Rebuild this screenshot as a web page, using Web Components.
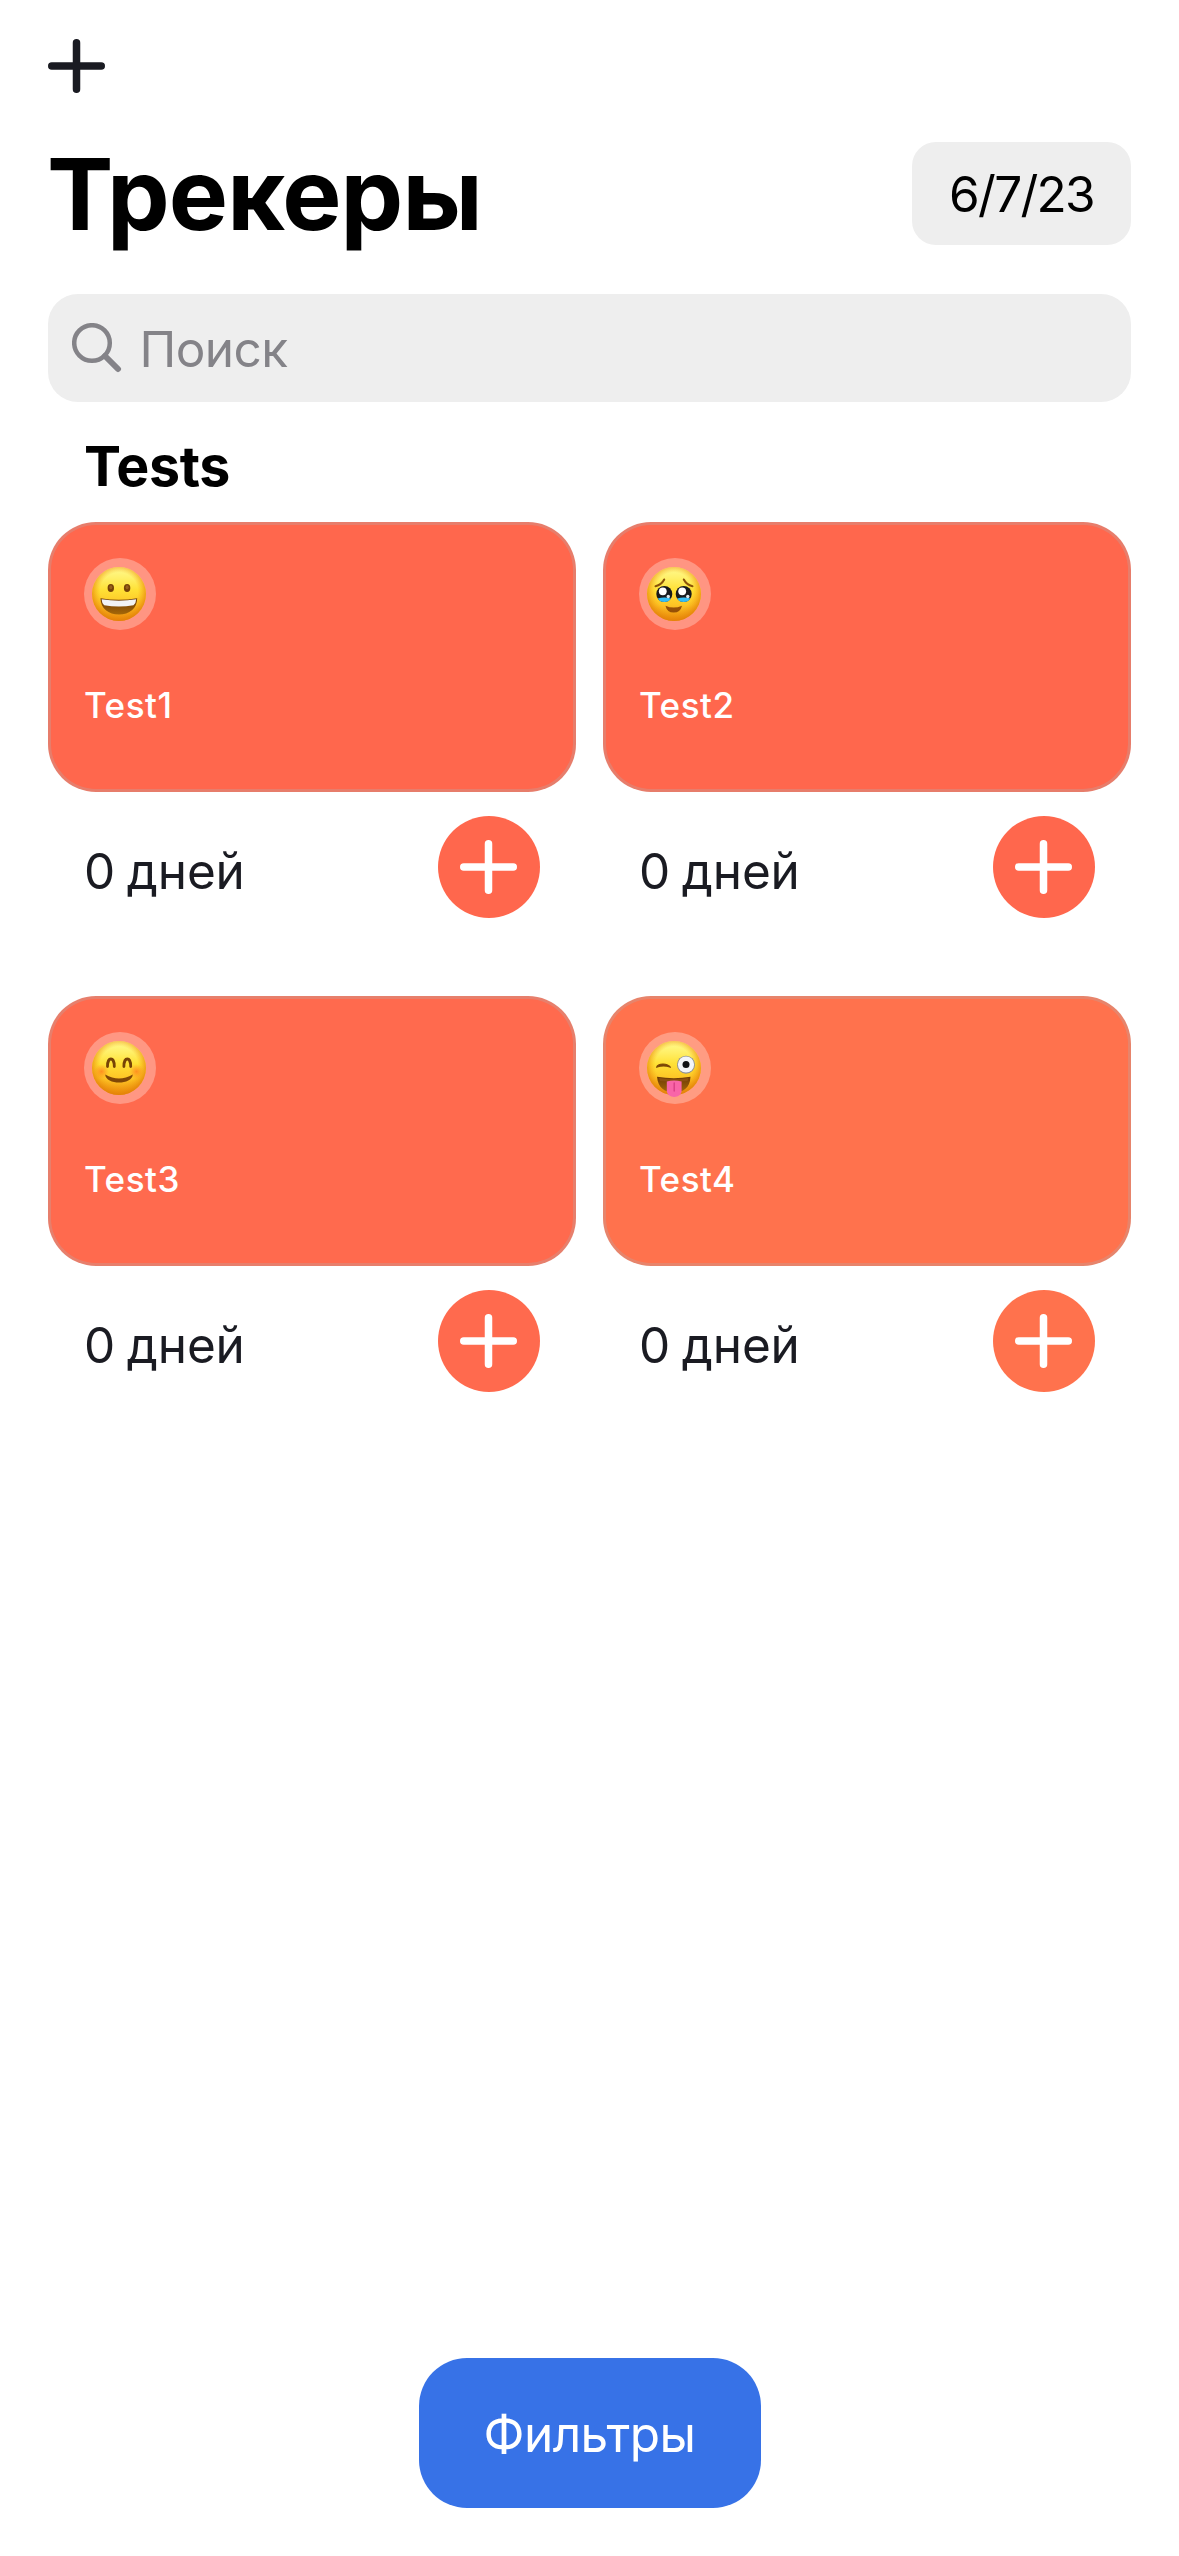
<!DOCTYPE html>
<html lang="ru"><head><meta charset="utf-8"><title>Трекеры</title>
<style>html,body{margin:0;background:#fff}body{font-family:Inter,"Liberation Sans",sans-serif}</style></head>
<body>
<tracker-app></tracker-app>
<script>
const def=(name,html,setup)=>customElements.define(name,class extends HTMLElement{
  constructor(){super();this.attachShadow({mode:'open'});}
  connectedCallback(){this.shadowRoot.innerHTML=html;if(setup)setup(this,this.shadowRoot);}
});

const face=(body)=>`<svg viewBox="0 0 54 54" width="54" height="54"><defs>
<linearGradient id="g" x1="0" y1="0" x2="0" y2="1"><stop offset="0" stop-color="#fffa90"/><stop offset=".2" stop-color="#fff06a"/><stop offset=".42" stop-color="#ffe136"/><stop offset=".7" stop-color="#fdc425"/><stop offset="1" stop-color="#ea8a0c"/></linearGradient>
<radialGradient id="e" cx=".5" cy=".45" r=".56"><stop offset=".62" stop-color="#f5a010" stop-opacity="0"/><stop offset="1" stop-color="#e27f08"/></radialGradient>
<radialGradient id="b"><stop offset="0" stop-color="#ff7a1c" stop-opacity=".75"/><stop offset="1" stop-color="#ff8a1c" stop-opacity="0"/></radialGradient>
<linearGradient id="m" x1="0" y1="0" x2="0" y2="1"><stop offset="0" stop-color="#6d3a05"/><stop offset="1" stop-color="#a56808"/></linearGradient></defs>
<circle cx="27" cy="27" r="27" fill="url(#g)"/><circle cx="27" cy="27" r="27" fill="url(#e)"/>${body}</svg>`;
const faces={
grin:face(`<ellipse cx="18.8" cy="21" rx="3.2" ry="4" fill="#764207"/><ellipse cx="35.1" cy="21" rx="3.2" ry="4" fill="#764207"/><ellipse cx="18.8" cy="20.3" rx="1.5" ry="2" fill="#98601c"/><ellipse cx="35.1" cy="20.3" rx="1.5" ry="2" fill="#98601c"/>
<path d="M8.5 31.200Q27 34.200 45.200 31.200C45 41.500 37.500 47.500 27 47.500S8.700 41.500 8.500 31.200Z" fill="url(#m)"/><path d="M9.600 32.300Q27 35 44.200 32.300Q44 36.500 41.500 38.200Q27 40.800 12.200 38.200Q9.800 36.500 9.600 32.300Z" fill="#f2f3f5"/>`),
tears:face(`<path d="M8.500 19.200Q14.500 17.800 17.200 12.500M36.800 12.500Q39.500 17.800 45.500 19.200" stroke="#8a5208" stroke-width="2" fill="none" stroke-linecap="round"/>
<circle cx="17.300" cy="27" r="8" fill="#17191d"/><circle cx="36.700" cy="27" r="8" fill="#17191d"/>
<path d="M10.800 31.500Q17.300 29.500 23.800 31.500Q22 35 17.300 35T10.800 31.500ZM30.200 31.500Q36.700 29.500 43.200 31.500Q41.500 35 36.700 35T30.200 31.500Z" fill="#35bdf5"/>
<circle cx="15.800" cy="24.300" r="3.900" fill="#fff"/><circle cx="35.200" cy="24.300" r="3.900" fill="#fff"/><circle cx="21.300" cy="29.500" r="1.700" fill="#dfe8ee"/><circle cx="40.800" cy="29.500" r="1.700" fill="#dfe8ee"/>
<path d="M18.500 38.700Q26.700 42.500 35 38.700Q33.500 45.500 26.700 45.500T18.500 38.700Z" fill="#965006"/>`),
blush:face(`<circle cx="9.500" cy="30.500" r="7.500" fill="url(#b)"/><circle cx="44.500" cy="30.500" r="7.500" fill="url(#b)"/>
<path d="M15.500 25.500C15.500 15.500 22.300 15.500 22.300 25.500M31.900 25.500C31.900 15.500 38.700 15.500 38.700 25.500" stroke="#774306" stroke-width="2.800" fill="none" stroke-linecap="round"/>
<path d="M13.200 33.500Q27 41.500 40.800 33.500C40 44.200 14 44.200 13.200 33.500Z" fill="#804706"/>`),
wink:face(`<path d="M9.500 26.300C11 21.800 20.500 21.800 23.500 26.300Q16.500 23.600 9.500 26.300Z" fill="#7c4706" stroke="#7c4706" stroke-width="1.100" stroke-linejoin="round"/>
<circle cx="39" cy="23.700" r="9" fill="#8c8f96"/><circle cx="39" cy="23.500" r="8.100" fill="#f3f5f8"/><circle cx="39" cy="23.600" r="3.500" fill="#101114"/>
<path d="M10 35.800Q27 38.500 43.500 35.800C43 47 36 51.500 27 51.500S11 47 10 35.800Z" fill="url(#m)"/><path d="M12 37Q27 39.500 41.500 37L40.500 40Q27 41.500 13 40Z" fill="#8b4f10"/>
<path d="M19.800 40.500Q27 38.500 34.600 40.500V49.500C34.600 58 19.800 58 19.800 49.500Z" fill="#f865a8"/><path d="M27.200 42V50" stroke="#d93f86" stroke-width="1.400" stroke-linecap="round"/>`)
};

def('plus-icon',`<style>:host{display:block;width:57px;height:54px}svg{display:block}</style>
<svg width="57" height="54"><path d="M3.750 27H53.250M28.500 3.750V50.250" stroke="currentColor" stroke-width="7.500" stroke-linecap="round"/></svg>`);

def('page-header',`<style>:host{display:block}
plus-icon{color:#1a1b22}
.row{display:flex;justify-content:space-between;align-items:center;height:103px;margin-top:49px}
h1{margin:0 0 0 -1px;font-size:99.500px;line-height:104px;font-weight:700;color:#000;letter-spacing:-.850px;white-space:nowrap}
.date{width:219px;height:103px;border-radius:24px;background:#eeeeee;display:flex;align-items:center;justify-content:center;font-size:49.500px;letter-spacing:-1.700px;color:#000;white-space:nowrap}
</style><plus-icon></plus-icon><div class="row"><h1><slot></slot></h1><div class="date"><slot name="date"></slot></div></div>`);

def('search-field',`<style>:host{display:flex;align-items:center;height:108px;border-radius:30px;background:#eeeeee;color:#848388;font-size:49.500px;letter-spacing:-.550px;box-sizing:border-box;padding-left:24px;gap:17.500px}
svg{flex:none}span{padding-top:1px}</style><svg width="50" height="50" fill="none" stroke="currentColor"><circle cx="20" cy="20" r="17.800" stroke-width="4.500"/><path d="M33 33L46 46" stroke-width="6" stroke-linecap="round"/></svg><span><slot></slot></span>`);

def('tracker-card',`<style>:host{display:block;width:528px}
.card{box-sizing:border-box;height:270px;border-radius:48px;background:var(--c);border:3px solid rgba(174,175,180,.3);padding:33px;display:flex;flex-direction:column;gap:57px}
.emoji{width:72px;height:72px;border-radius:50%;background:rgba(255,255,255,.3);display:flex;box-sizing:border-box;padding:9px 0 0 8px}
.emoji svg{display:block;overflow:visible}
.name{color:#fff;font-size:35px;font-weight:500;line-height:36px;letter-spacing:.500px}
.foot{display:flex;justify-content:space-between;height:102px;margin-top:24px;padding:0 36px;align-items:center}
.days{font-size:49.500px;color:#1a1b22;letter-spacing:-.150px;word-spacing:-2px;line-height:60px;padding:8px 0 0 0}
.add{width:102px;height:102px;border-radius:50%;background:var(--c);color:#fff;display:flex;align-items:center;justify-content:center;box-sizing:border-box;padding-right:1px}
</style><div class="card"><div class="emoji"></div><div class="name"><slot></slot></div></div>
<div class="foot"><div class="days"><slot name="days"></slot></div><div class="add"><plus-icon></plus-icon></div></div>`,
(h,r)=>{h.style.setProperty('--c',h.getAttribute('color'));r.querySelector('.emoji').innerHTML=faces[h.getAttribute('face')];});

def('tracker-section',`<style>:host{display:block}
h2{margin:0 0 0 36px;font-size:55.500px;line-height:68px;font-weight:700;color:#000;letter-spacing:-.400px}
.grid{display:grid;grid-template-columns:528px 528px;column-gap:27px;row-gap:78px;margin-top:22px}
</style><h2><slot name="title"></slot></h2><div class="grid"><slot></slot></div>`);

def('filter-button',`<style>:host{display:flex;align-items:center;justify-content:center;width:342px;height:150px;border-radius:48px;background:#3772e7;color:#fff;font-size:49.500px;letter-spacing:-.600px;white-space:nowrap}span{padding-top:1px}</style><span><slot></slot></span>`);

def('tracker-app',`<style>:host{display:flex;flex-direction:column;box-sizing:border-box;width:1179px;height:2556px;padding:39px 48px 48px}
search-field{margin-top:49px}tracker-section{margin-top:30px}filter-button{margin:auto auto 0}</style>
<page-header>Трекеры<span slot="date">6/7/23</span></page-header>
<search-field>Поиск</search-field>
<tracker-section><span slot="title">Tests</span>
<tracker-card color="#ff674d" face="grin">Test1<span slot="days">0 дней</span></tracker-card>
<tracker-card color="#ff674d" face="tears">Test2<span slot="days">0 дней</span></tracker-card>
<tracker-card color="#ff6a4e" face="blush">Test3<span slot="days">0 дней</span></tracker-card>
<tracker-card color="#ff724d" face="wink">Test4<span slot="days">0 дней</span></tracker-card>
</tracker-section>
<filter-button>Фильтры</filter-button>`);
</script></body></html>
